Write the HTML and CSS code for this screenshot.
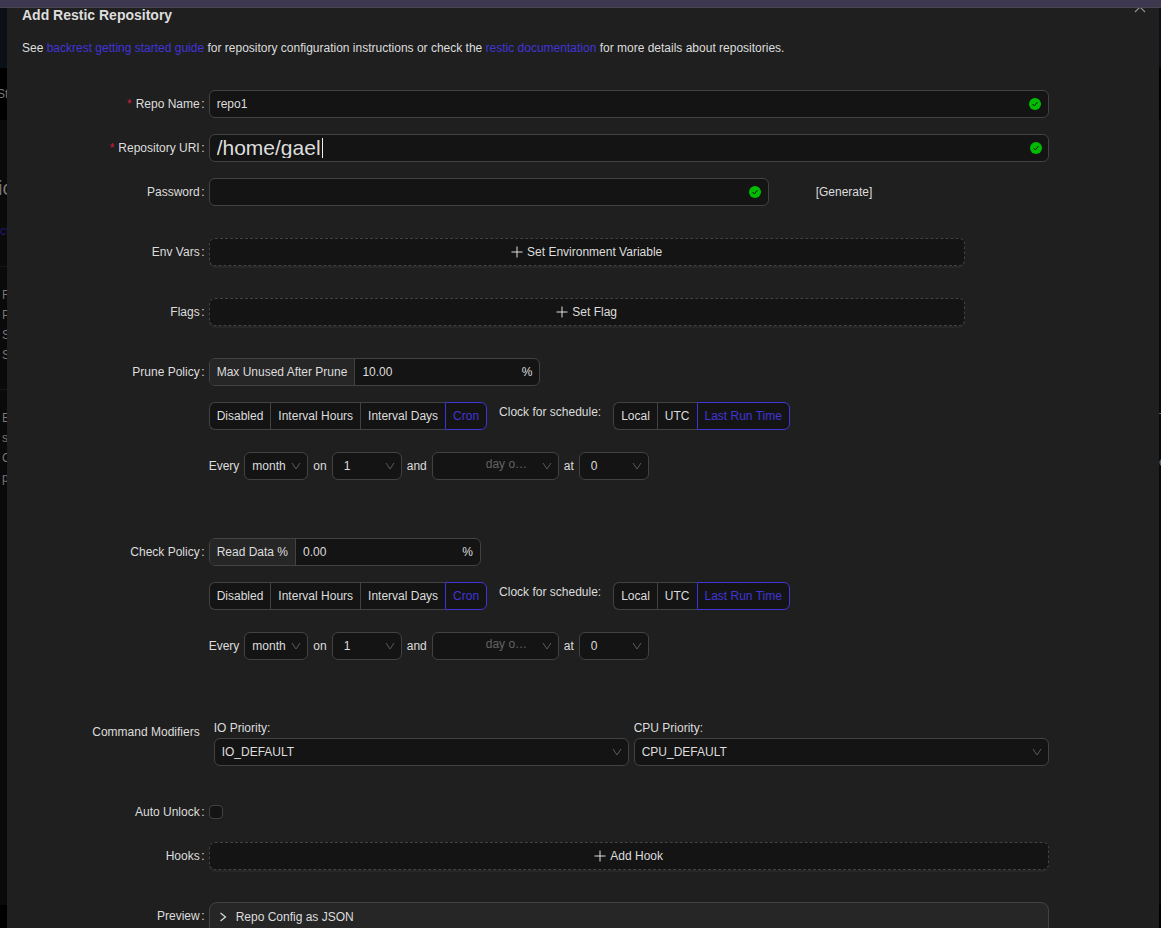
FILE: index.html
```html
<!DOCTYPE html>
<html lang="en">
<head>
<meta charset="utf-8">
<title>Add Restic Repository</title>
<link rel="stylesheet" href="styles.css">
</head>
<body>
<svg class="sprite" aria-hidden="true">
  <symbol id="down" viewBox="0 0 10 10"><path d="M1 2 5 8 9 2" fill="none" stroke="currentColor"/></symbol>
  <symbol id="plus" viewBox="0 0 12 12"><path d="M6 .5v11M.5 6h11" fill="none" stroke="currentColor"/></symbol>
  <symbol id="check" viewBox="0 0 12 12"><circle cx="6" cy="6" r="6" fill="#00bb00"/><path d="M3.5 6 5.3 8 8.5 4" fill="none" stroke="#141414"/></symbol>
</svg>
<div class="topbar"></div>
<div class="stage">
  <aside class="gutter gutter-left" aria-hidden="true">
    <div class="band-head"></div>
    <div class="band-nav">St</div>
    <div class="band-page">
      <div class="page-title">ic</div>
      <div class="page-link">ct</div>
      <div class="page-block">F<br>P<br>S<br>S</div>
      <div class="page-block">E<br>s<br>C<br>p</div>
    </div>
  </aside>
  <main class="modal" role="dialog" aria-labelledby="title">
    <button class="close" type="button" aria-label="Close"><svg viewBox="0 0 12 12"><path d="M1 1 11 11M11 1 1 11" fill="none" stroke="currentColor" stroke-width="1.2"/></svg></button>
    <h1 class="title" id="title">Add Restic Repository</h1>
    <p class="intro">See <a href="#guide">backrest getting started guide</a> for repository configuration instructions or check the <a href="#docs">restic documentation</a> for more details about repositories.</p>
    <form class="form">
      <div class="row">
        <label class="label required" for="name">Repo Name</label>
        <div class="field box"><input id="name" type="text" value="repo1"><svg class="ok ok-inset"><use href="#check"/></svg></div>
      </div>
      <div class="row">
        <label class="label required" for="uri">Repository URI</label>
        <div class="field box"><input class="uri" id="uri" type="text" value="/home/gael"><span class="caret"></span><svg class="ok"><use href="#check"/></svg></div>
      </div>
      <div class="row row-wide">
        <label class="label" for="password">Password</label>
        <div class="field password">
          <div class="box"><input id="password" type="password"><svg class="ok"><use href="#check"/></svg></div>
          <button class="text-button" type="button">[Generate]</button>
        </div>
      </div>
      <div class="row row-wide">
        <span class="label">Env Vars</span>
        <div class="field"><button class="dashed dashed-short" type="button"><svg class="plus"><use href="#plus"/></svg>Set Environment Variable</button></div>
      </div>
      <div class="row row-wide">
        <span class="label">Flags</span>
        <div class="field"><button class="dashed dashed-short" type="button"><svg class="plus"><use href="#plus"/></svg>Set Flag</button></div>
      </div>
      <div class="row row-policy">
        <label class="label" for="prune">Prune Policy</label>
        <div class="field policy">
          <div class="number"><span class="addon">Max Unused After Prune</span><span class="number-box"><input id="prune" type="text" value="10.00"><span>%</span></span></div>
          <div class="schedule">
            <div class="segments">
              <label><input type="radio" name="prune-mode">Disabled</label><label><input type="radio" name="prune-mode">Interval Hours</label><label><input type="radio" name="prune-mode">Interval Days</label><label><input type="radio" name="prune-mode" checked>Cron</label>
            </div>
            <span class="clock">Clock for schedule:</span>
            <div class="segments">
              <label><input type="radio" name="prune-clock">Local</label><label><input type="radio" name="prune-clock">UTC</label><label><input type="radio" name="prune-clock" checked>Last Run Time</label>
            </div>
          </div>
          <div class="cron">
            <span>Every</span>
            <span class="select period"><select aria-label="Period"><option>month</option></select><svg><use href="#down"/></svg></span>
            <span>on</span>
            <span class="select unit"><select aria-label="Day of month"><option>1</option></select><svg><use href="#down"/></svg></span>
            <span>and</span>
            <span class="select weekday"><select aria-label="Day of week"><option>day o…</option></select><svg><use href="#down"/></svg></span>
            <span>at</span>
            <span class="select unit"><select aria-label="Hour"><option>0</option></select><svg><use href="#down"/></svg></span>
          </div>
        </div>
      </div>
      <div class="row row-policy">
        <label class="label" for="check-data">Check Policy</label>
        <div class="field policy">
          <div class="number"><span class="addon">Read Data %</span><span class="number-box"><input id="check-data" type="text" value="0.00"><span>%</span></span></div>
          <div class="schedule">
            <div class="segments">
              <label><input type="radio" name="check-mode">Disabled</label><label><input type="radio" name="check-mode">Interval Hours</label><label><input type="radio" name="check-mode">Interval Days</label><label><input type="radio" name="check-mode" checked>Cron</label>
            </div>
            <span class="clock">Clock for schedule:</span>
            <div class="segments">
              <label><input type="radio" name="check-clock">Local</label><label><input type="radio" name="check-clock">UTC</label><label><input type="radio" name="check-clock" checked>Last Run Time</label>
            </div>
          </div>
          <div class="cron">
            <span>Every</span>
            <span class="select period"><select aria-label="Period"><option>month</option></select><svg><use href="#down"/></svg></span>
            <span>on</span>
            <span class="select unit"><select aria-label="Day of month"><option>1</option></select><svg><use href="#down"/></svg></span>
            <span>and</span>
            <span class="select weekday"><select aria-label="Day of week"><option>day o…</option></select><svg><use href="#down"/></svg></span>
            <span>at</span>
            <span class="select unit"><select aria-label="Hour"><option>0</option></select><svg><use href="#down"/></svg></span>
          </div>
        </div>
      </div>
      <div class="row row-wide">
        <span class="label no-colon">Command Modifiers</span>
        <div class="field modifiers">
          <div class="modifier"><label for="io">IO Priority:</label><span class="select"><select id="io"><option>IO_DEFAULT</option></select><svg><use href="#down"/></svg></span></div>
          <div class="modifier"><label for="cpu">CPU Priority:</label><span class="select"><select id="cpu"><option>CPU_DEFAULT</option></select><svg><use href="#down"/></svg></span></div>
        </div>
      </div>
      <div class="row">
        <label class="label" for="unlock">Auto Unlock</label>
        <div class="field unlock"><input class="checkbox" id="unlock" type="checkbox"></div>
      </div>
      <div class="row row-wide">
        <span class="label">Hooks</span>
        <div class="field"><button class="dashed" type="button"><svg class="plus"><use href="#plus"/></svg>Add Hook</button></div>
      </div>
      <div class="row">
        <span class="label">Preview</span>
        <div class="field"><button class="collapse" type="button" aria-expanded="false"><svg viewBox="0 0 10 10"><path d="M2.500 1 7.500 5 2.500 9" fill="none" stroke="currentColor" stroke-width="1.200"/></svg>Repo Config as JSON</button></div>
      </div>
    </form>
  </main>
  <aside class="gutter gutter-right" aria-hidden="true">
    <div class="band-head"></div>
    <div class="band-nav"></div>
    <div class="band-page">
      <div class="page-edge">T<br><br>e</div>
    </div>
  </aside>
</div>
</body>
</html>
```
FILE: styles.css
```css
* { box-sizing: border-box; }

body {
  margin: 0;
  height: 100vh;
  overflow: hidden;
  display: flex;
  flex-direction: column;
  background: #000;
  color: #dddddd;
  font: 12px/20px "Liberation Sans", Arial, sans-serif;
}

input, select, button { font: inherit; color: inherit; }
button { cursor: pointer; }
.sprite { display: none; }

.topbar {
  flex: none;
  height: 8px;
  background: #3d374f;
  border-bottom: 1px solid #48464e;
}

.stage {
  flex: 1;
  min-height: 0;
  display: grid;
  grid-template-columns: 7px minmax(0, 1fr) 2px;
  grid-template-rows: minmax(0, 1fr);
}

/* Dimmed page behind the dialog */
.gutter {
  display: flex;
  flex-direction: column;
  overflow: hidden;
  white-space: nowrap;
  color: #777;
  padding-bottom: 23px;
}
.band-head { flex: none; height: 60px; background: #0b1017; }
.band-nav { flex: none; height: 52px; line-height: 52px; text-indent: -3px; background: #000; }
.band-page { flex: 1; background: #0a0a0a; }
.page-title { padding-top: 54px; font-size: 20px; line-height: 28px; text-indent: -2px; }
.page-link { padding: 19px 0 25px; color: #1f1b70; }
.page-block { border-top: 1px solid #161616; padding: 18px 0 24px 2px; }
.page-edge { padding-top: 287px; line-height: 22px; }

.modal {
  position: relative;
  overflow: hidden;
  padding: 0 17px 0 15px;
  background: #1f1f1f;
}
.close {
  position: absolute;
  top: -7px;
  right: 13px;
  width: 12px;
  height: 12px;
  padding: 0;
  border: 0;
  background: none;
  color: #8f8f8f;
}
.close svg { display: block; width: 12px; height: 12px; }
.title { margin: 0; font-size: 14px; line-height: 14px; font-weight: 700; }
.intro { margin: 16px 0 32px; }
a { color: #4035d8; text-decoration: none; }

/* Form rows: label, control and right-hand margin columns */
.row {
  display: grid;
  grid-template-columns: 4fr 18fr 2fr;
  margin-bottom: 16px;
}
.row-wide { margin-bottom: 32px; }
.row-policy { margin-bottom: 58px; }
.field { min-width: 0; }
.label { line-height: 28px; text-align: right; white-space: nowrap; }
.label::after { content: ":"; display: inline-block; width: 5px; margin-right: 4px; }
.no-colon::after { content: ""; }
.required::before { content: "*"; color: #d31a45; margin-right: 4px; }

.box {
  position: relative;
  display: flex;
  align-items: center;
  height: 28px;
  padding: 0 6px 0 7px;
  border: 1px solid #424242;
  border-radius: 6px;
  background: #141414;
}
.box input, .number-box input {
  flex: 1;
  min-width: 0;
  height: 20px;
  padding: 0;
  border: 0;
  outline: 0;
  background: none;
}
.box .uri { font-size: 21px; }
.caret { position: absolute; left: 112px; top: 3px; width: 1px; height: 20px; background: #eee; }
.ok { flex: none; width: 12px; height: 12px; }
.ok-inset { margin-right: 1px; }

.password { display: grid; grid-template-columns: 2fr 1fr; }
.password .box { padding-right: 7px; }
.text-button { justify-self: start; margin-left: 40px; padding: 0 7px; border: 0; background: none; }

.dashed {
  display: flex;
  align-items: center;
  justify-content: center;
  gap: 4px;
  width: 100%;
  height: 28px;
  padding: 0;
  border: 1px dashed #424242;
  border-radius: 6px;
  background: #141414;
  box-shadow: 0 2px 0 rgba(255, 255, 255, .04);
}
.dashed-short { width: 90%; }
.plus { width: 12px; height: 12px; }

.policy { display: flex; flex-direction: column; align-items: flex-start; }
.number {
  display: flex;
  height: 28px;
  border: 1px solid #424242;
  border-radius: 6px;
  overflow: hidden;
  background: #141414;
  line-height: 26px;
}
.addon { padding: 0 7px; background: #262626; border-right: 1px solid #424242; }
.number-box { display: flex; align-items: center; width: 184px; padding: 0 7px; }

.schedule { display: flex; align-items: flex-start; gap: 12px; margin: 16px 0 22px; }
.segments { display: flex; }
.segments label {
  position: relative;
  height: 28px;
  padding: 0 7px;
  border: 1px solid #424242;
  border-right-width: 0;
  background: #141414;
  line-height: 26px;
  white-space: nowrap;
}
.segments label:first-child { border-radius: 6px 0 0 6px; }
.segments label:last-child { border-right-width: 1px; border-radius: 0 6px 6px 0; }
.segments label:has(:checked) { border-color: #4035d8; color: #4035d8; }
.segments input { position: absolute; inset: 0; margin: 0; opacity: 0; }

.cron { display: flex; align-items: center; gap: 5px; }
.select { position: relative; display: block; }
.select select {
  display: block;
  appearance: none;
  width: 100%;
  height: 28px;
  padding: 0 24px 0 7px;
  border: 1px solid #424242;
  border-radius: 6px;
  outline: 0;
  background: #141414;
}
.select svg {
  position: absolute;
  top: 9px;
  right: 7px;
  width: 10px;
  height: 10px;
  color: #5a5a5a;
  pointer-events: none;
}
.period { width: 64px; }
.period select { padding-right: 16px; }
.unit { width: 70px; }
.unit select { padding-left: 11px; }
.weekday { width: 127px; }
.weekday select { padding: 0 24px 4px 53px; color: #636363; }

.modifiers { display: grid; grid-template-columns: 1fr 1fr; gap: 5px; padding-left: 5px; }
.modifier { min-width: 0; }
.modifier label { display: block; }
.no-colon { align-self: start; }

.unlock { display: flex; align-items: center; }
.checkbox {
  appearance: none;
  width: 14px;
  height: 14px;
  margin: 0;
  border: 1px solid #424242;
  border-radius: 4px;
  background: #141414;
}

.collapse {
  display: flex;
  align-items: flex-start;
  gap: 8px;
  width: 100%;
  height: 44px;
  padding: 4px 8px;
  border: 1px solid #424242;
  border-radius: 8px;
  background: #262626;
  text-align: left;
}
.collapse svg { width: 10px; height: 10px; margin-top: 5px; }
```
